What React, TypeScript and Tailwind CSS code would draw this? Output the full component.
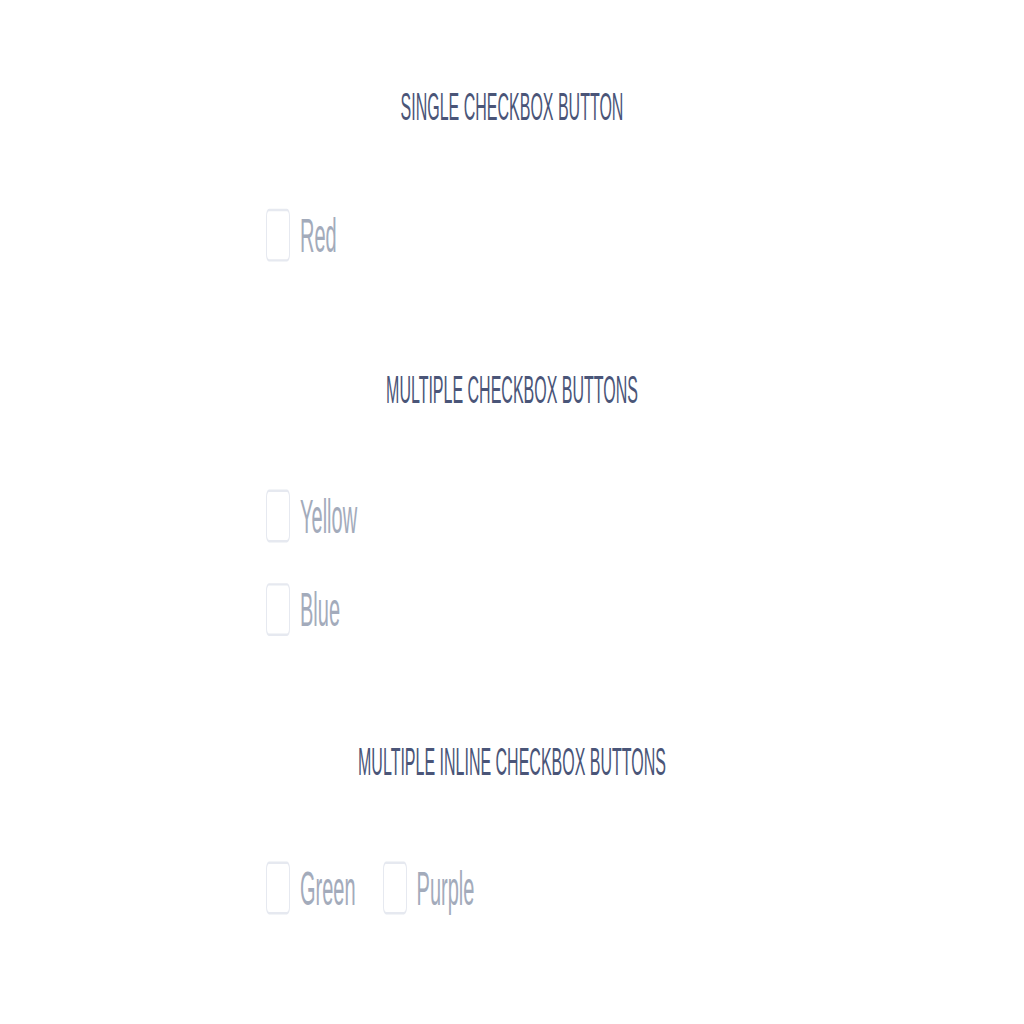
import React from "react";

function Box() {
  return <div className="w-[24px] h-[22px] border border-[#e6e9f0] rounded-[3px] bg-white shrink-0" />;
}

function Item({ label }: { label: string }) {
  return (
    <div className="flex items-center gap-[10px]">
      <Box />
      <span className="text-[20px] leading-[22px] text-[#a3abbb]">{label}</span>
    </div>
  );
}

function Title({ children, mt }: { children: React.ReactNode; mt: string }) {
  return (
    <div className={`${mt} text-center text-[16px] leading-[20px] text-[#4a5578]`}>{children}</div>
  );
}

export default function App() {
  return (
    <div className="w-[1024px] h-[1024px] bg-white overflow-hidden">
      <div className="origin-top scale-y-[2.4] font-['Liberation_Sans',Arial,sans-serif]">
        <div className="pt-[35px] text-center text-[16px] leading-[20px] text-[#4a5578]">SINGLE CHECKBOX BUTTON</div>
        <div className="pl-[266px] mt-[31.5px]">
          <Item label="Red" />
        </div>
        <Title mt="mt-[44px]">MULTIPLE CHECKBOX BUTTONS</Title>
        <div className="pl-[266px] mt-[31.5px] flex flex-col gap-[16.5px]">
          <Item label="Yellow" />
          <Item label="Blue" />
        </div>
        <Title mt="mt-[43.5px]">MULTIPLE INLINE CHECKBOX BUTTONS</Title>
        <div className="pl-[266px] mt-[31px] flex gap-[27px]">
          <Item label="Green" />
          <Item label="Purple" />
        </div>
      </div>
    </div>
  );
}
